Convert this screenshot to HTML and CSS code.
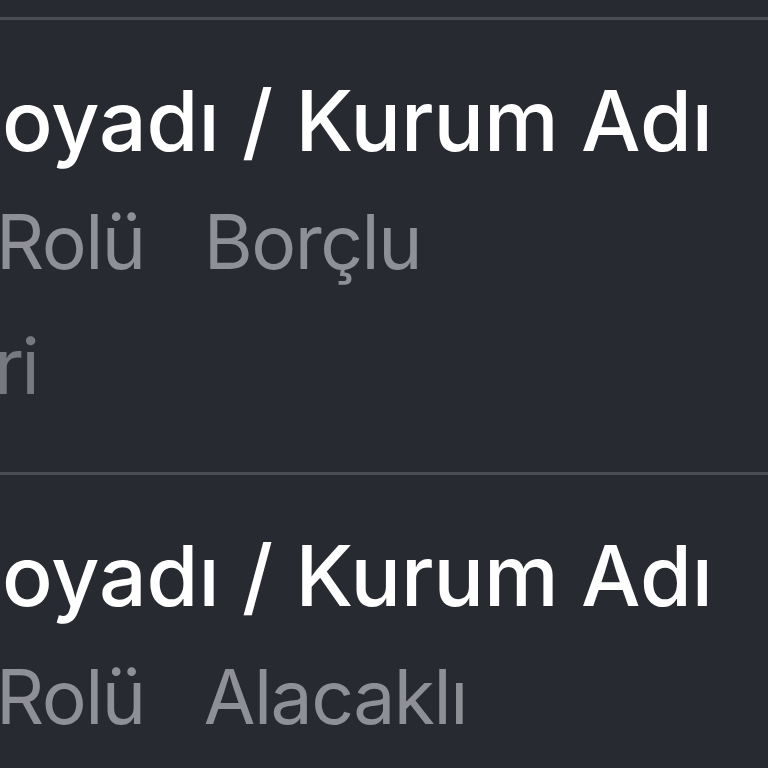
FILE: index.html
```html
<!DOCTYPE html>
<html lang="tr">
<head>
<meta charset="utf-8">
<link rel="stylesheet" href="styles.css">
</head>
<body>
<div class="list">
  <div class="row">
    <div class="title">oyadı / Kurum Adı</div>
    <div class="sub"><span class="label">Rolü</span><span class="value">Borçlu</span></div>
    <div class="extra">ri</div>
  </div>
  <div class="row">
    <div class="title">oyadı / Kurum Adı</div>
    <div class="sub"><span class="label">Rolü</span><span class="value">Alacaklı</span></div>
  </div>
</div>
</body>
</html>
```
FILE: styles.css
```css
html, body {
  margin: 0;
  padding: 0;
  background: #272a31;
  overflow: hidden;
}
body {
  width: 768px;
  height: 768px;
  font-family: Inter, "Noto Sans", sans-serif;
}
.list {
  padding-top: 17px;
}
.row {
  border-top: 3px solid #4a4d55;
  padding: 51px 0 44px 0;
}
.title {
  font-size: 84px;
  font-weight: 500;
  line-height: 100px;
  color: #ffffff;
  white-space: nowrap;
  padding-left: 2px;
}
.sub {
  margin-top: 9px;
  margin-left: -4px;
  font-size: 75px;
  letter-spacing: -1.5px;
  line-height: 124px;
  color: #8e9095;
  white-space: nowrap;
  display: flex;
  gap: 59px;
}
.extra {
  margin-left: -6px;
  font-size: 77px;
  letter-spacing: -3px;
  line-height: 124px;
  color: #76797f;
  white-space: nowrap;
}
```
